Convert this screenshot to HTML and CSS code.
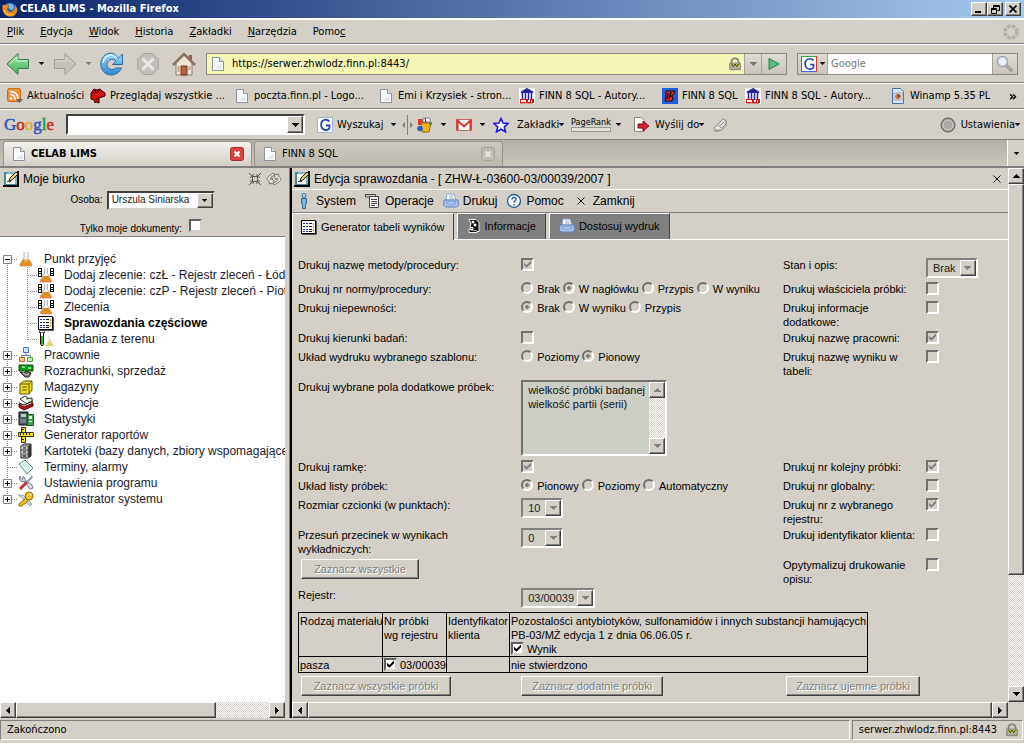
FILE: index.html
```html
<!DOCTYPE html>
<html lang="pl">
<head>
<meta charset="utf-8">
<title>CELAB LIMS - Mozilla Firefox</title>
<link rel="stylesheet" href="styles.css">
</head>
<body>
<svg class="defs" aria-hidden="true">
  <defs>
    <linearGradient id="g-green" x1="0" y1="0" x2="0" y2="1"><stop offset="0" stop-color="#a6e8b0"/><stop offset="1" stop-color="#3fae58"/></linearGradient>
    <linearGradient id="g-blue" x1="0" y1="0" x2="0" y2="1"><stop offset="0" stop-color="#9fdcf8"/><stop offset="1" stop-color="#2b86cf"/></linearGradient>
    <symbol id="down" viewBox="0 0 7 4"><path d="M0 0h7v1H6v1H5v1H4v1H3V3H2V2H1V1H0z"/></symbol>
    <symbol id="up" viewBox="0 0 7 4"><path d="M3 0h1v1h1v1h1v1h1v1H0V3h1V2h1V1h1z"/></symbol>
    <symbol id="left" viewBox="0 0 4 7"><path d="M4 0v7H3V6H2V5H1V4H0V3h1V2h1V1h1V0z"/></symbol>
    <symbol id="right" viewBox="0 0 4 7"><path d="M0 0v7h1V6h1V5h1V4h1V3H3V2H2V1H1V0z"/></symbol>
    <symbol id="page" viewBox="0 0 16 16"><path d="M2.500 1.500h7l4 4v9h-11z" fill="#fbfcfe" stroke="#8d939b"/><path d="M9.500 1.500v4h4" fill="#dfe4ea" stroke="#8d939b"/><path d="M4 13h8V8z" fill="#e3e7ee"/></symbol>
    <symbol id="firefox" viewBox="0 0 16 16"><circle cx="8" cy="8" r="6.500" fill="#2d5fb8"/><path d="M6 3c3-1 6 0 6 3s-2 3-4 3z" fill="#79b8ee"/><path d="M1 3c0 1 1 1 2 1 1-1 3-1 4-1C5 4 5 5 7 6c0 1-2 1-2 2 0 3 4 4 6 2 2-1 2-4 2-6 3 3 3 7 0 10-3 2.500-8 2-10.500-1C0 10 0 6 1 3z" fill="#f08a1c"/><path d="M2 9c1 4 5 6 9 4" stroke="#ffd24a" fill="none"/></symbol>
    <symbol id="back" viewBox="0 0 24 24"><path d="M1 12 12 1.500V7.500h10.500v9H12v6z" fill="url(#g-green)" stroke="#35864a" stroke-linejoin="round"/><path d="M3.500 12 11 5v4h10" fill="none" stroke="#d8f7dc"/></symbol>
    <symbol id="forward" viewBox="0 0 24 24"><path d="M23 12 12 1.500V7.500H1.500v9H12v6z" fill="#c4c2bc" stroke="#a09e98" stroke-linejoin="round"/><path d="M3 9h10V5l7 7" fill="none" stroke="#dedcd6"/></symbol>
    <symbol id="reload" viewBox="0 0 24 24"><path d="M18 6.500 22.500 2v10.500H12.500L16 9c-4-3.500-9-1-9 3.500 0 4.500 5 6.500 9 3.500h5.500c-2 4.500-6 7-10.500 7C5 23 .8 18 .8 12.200.8 6 5 1.200 11 1.200c3 0 5.500 2 7 5.300z" fill="url(#g-blue)" stroke="#2a6ca8"/><path d="M3 11c0-4 4-8 8-8 2 0 4 1 6 3" stroke="#d7f1fd" stroke-width="1.500" fill="none"/></symbol>
    <symbol id="stop" viewBox="0 0 24 24"><path d="M7.500 1.500h9l6 6v9l-6 6h-9l-6-6v-9z" fill="#c2c0ba" stroke="#a9a7a1"/><path d="m7.500 7.500 9 9m0-9-9 9" stroke="#eceae5" stroke-width="3" stroke-linecap="round"/></symbol>
    <symbol id="home" viewBox="0 0 24 24"><path d="M17 3h3v6h-3z" fill="#a35a4a"/><path d="M4 11 12 3l8 8v12H4z" fill="#eee5d6" stroke="#8f7d6c"/><path d="M1 13 12 2l11 11" fill="none" stroke="#8a7161" stroke-width="2.500"/><path d="M9 14h6v9H9z" fill="#b5623f" stroke="#6f3c28"/><path d="M5.500 14h2v6h-2zM16.500 14h2v4h-2z" fill="#c4a58b"/></symbol>
    <symbol id="lock" viewBox="0 0 16 16"><path d="M4 8V5.500C4 3 5.500 1.500 8 1.500S12 3 12 5.500V8" fill="none" stroke="#85857f" stroke-width="2"/><path d="M2 7h12v7.500H2z" fill="#a9a9a3" stroke="#73736d"/><path d="m3 8 2 3 2-3 2 3 2-3 2 3" fill="none" stroke="#d9cf3a" stroke-width="1.500"/><path d="m4 8 2 3 2-3 2 3 2-3" fill="none" stroke="#222"/></symbol>
    <symbol id="go" viewBox="0 0 12 14"><path d="M1 1.500 11 7 1 12.500z" fill="#58c07e" stroke="#2c7d4c"/></symbol>
    <symbol id="gicon" viewBox="0 0 16 16"><path d="M.5.500h15v15H.5z" fill="#fff" stroke="#9ab2d8"/><path d="M12.500 4.500C11 2.500 7.500 2 5.500 4S3.500 10 6 12s6 1 6.500-1V8.500H9" fill="none" stroke="#1f44b8" stroke-width="1.800"/></symbol>
    <symbol id="gicon4" viewBox="0 0 16 16"><path d="M0 0h16v16H0z" fill="#fff"/><path d="M.5 0v16M0 15.500h16" stroke="#3769d8"/><path d="M0 .5h16" stroke="#2ca33c"/><path d="M15.500 0v16" stroke="#d8322a"/><path d="M12.500 4.500C11 2.500 7.500 2 5.500 4S3.500 10 6 12s6 1 6.500-1V8.500H9" fill="none" stroke="#1f44b8" stroke-width="1.600"/></symbol>
    <symbol id="magnifier" viewBox="0 0 18 18"><path d="m10 10 6 6" stroke="#8c8c8c" stroke-width="3"/><path d="m10 10 5 5" stroke="#d6d6d6"/><circle cx="6.500" cy="6.500" r="5" fill="#e3f0fa" stroke="#a3a8ad" stroke-width="1.500"/></symbol>
    <symbol id="throbber" viewBox="0 0 18 18"><circle cx="9" cy="9" r="6" fill="none" stroke="#b3b0a9" stroke-width="3.500" stroke-dasharray="3.500 1.210"/></symbol>
    <symbol id="rss" viewBox="0 0 16 16"><rect x=".5" y=".5" width="13" height="13" rx="2" fill="#f19131" stroke="#c4681a"/><circle cx="4" cy="10.500" r="1.300" fill="#fff"/><path d="M3 6.500c3 0 5 2 5 5M3 3.500c5 0 8 3 8 8" fill="none" stroke="#fff" stroke-width="1.500"/><path d="M9 11h7l-3.500 4z" fill="#666"/></symbol>
    <symbol id="dino" viewBox="0 0 16 16"><path d="M1 5 4 1l3 1 3-1 2 2 3 2v3l-3 1-3 1v5l-3-1-1 1-1-3-3-1V8z" fill="#d40d0d" stroke="#3b0000"/><path d="m3 4 2 2m0-4 1 3m2-3v3M6 11h3" stroke="#220000"/></symbol>
    <symbol id="temple" viewBox="0 0 16 16"><path d="M0 0h16v16H0z" fill="#fff"/><path d="M8 0 1 4h14zM2 4h12v1H2z" fill="#26269b"/><path d="M3.500 5v7M6.500 5v7M9.500 5v7M12.500 5v7" stroke="#26269b" stroke-width="1.500"/><path d="M1 11h5v1H2v2h4v1H1zM7 11h2v3h2v-3h1v4H7zM13 11h2v4h-2z" fill="#d81818"/><path d="M1 15h13" stroke="#d81818"/></symbol>
    <symbol id="finnb" viewBox="0 0 16 16"><path d="M0 0h16v16H0z" fill="#1f5ed8"/><path d="M4 3h9l-1 3-2 2 1 2-1 3H3l1-5z" fill="#e22718" stroke="#111"/><path d="m6 5-1 6m4-7-2 7m0-3h3" stroke="#111" stroke-width="1.300"/></symbol>
    <symbol id="winamp" viewBox="0 0 16 16"><path d="M2.500.500h8l3 3v12h-11z" fill="#d6e6f8" stroke="#4473b8"/><path d="M4 5h8v7H4z" fill="#fff" stroke="#7796c4" stroke-width=".8"/><circle cx="8" cy="8.500" r="3" fill="#e57d22"/><circle cx="8.500" cy="8" r="1.600" fill="#3464b0"/></symbol>
    <symbol id="vsplit" viewBox="0 0 12 20"><path d="M6.500 0v20" stroke="#808080"/><path d="M4 7v6L1 10zM9 7v6l3-3z" fill="#808080"/></symbol>
    <symbol id="toys" viewBox="0 0 16 16"><path d="M1 2h6v6H1z" fill="#d9392b"/><path d="M6 1h7v4H6z" fill="#fff" stroke="#888"/><path d="M4 6h10l-2 9H5z" fill="#f0b323" stroke="#8d6a12"/><path d="M12 5h3v3h-3z" fill="#38a13f"/><circle cx="3" cy="11.500" r="2.800" fill="#2f62c2"/><path d="M8 1 9 6" stroke="#333"/></symbol>
    <symbol id="gmail" viewBox="0 0 16 12"><path d="M.5.500h15v11H.5z" fill="#fff" stroke="#c66"/><path d="M1.500 11V1.500L8 7.500l6.500-6V11" fill="none" stroke="#dc3327" stroke-width="2"/></symbol>
    <symbol id="star" viewBox="0 0 16 16"><path d="m8 1.500 2 4.500 5 .5-3.700 3.300 1.200 5L8 12.200l-4.500 2.600 1.200-5L1 6.500 6 6z" fill="#fff" stroke="#1c1ce0" stroke-width="1.600"/></symbol>
    <symbol id="send" viewBox="0 0 16 16"><path d="M1.500.500h7l3 3v11h-10z" fill="#fff" stroke="#8a8a8a"/><path d="M5 7h5V4l6 5-6 5v-3H5z" fill="#d41f2e" stroke="#8a0b18"/></symbol>
    <symbol id="pen" viewBox="0 0 15 15"><path d="M1 11 5 7l6-6 3 2v5l-5 5H3z" fill="#e6e4df" stroke="#777"/><path d="m5 7 4 4 5-5M7 9l5-5M1 14h6" fill="none" stroke="#888"/></symbol>
    <symbol id="disc" viewBox="0 0 16 16"><circle cx="8" cy="8" r="7" fill="#9a9a96" stroke="#5c5c5a"/><circle cx="8" cy="8" r="5" fill="#aaa9a5" stroke="#d0d0cc"/></symbol>
    <symbol id="x-red" viewBox="0 0 14 14"><rect x=".5" y=".5" width="13" height="13" rx="2" fill="#d9443f" stroke="#a62c2a"/><path d="m4.500 4.500 5 5m0-5-5 5" stroke="#fff" stroke-width="2"/></symbol>
    <symbol id="x-gray" viewBox="0 0 14 14"><rect x=".5" y=".5" width="13" height="13" rx="2" fill="#c0bdb7" stroke="#a5a29c"/><path d="m4.500 4.500 5 5m0-5-5 5" stroke="#e9e7e3" stroke-width="2"/></symbol>
    <symbol id="edit" viewBox="0 0 16 16"><path d="M1 1h14v14H1z" fill="#7fb6c6"/><path d="M1 15V1h3v12h10v2z" fill="#3f87a3"/><path d="M3 3h9v10H3z" fill="#fffef0"/><path d="M15 0v15H0" fill="none" stroke="#000" stroke-width="2"/><path d="m6 10 1-3 6-6 2 2-6 6z" fill="#e9d26a" stroke="#222"/><path d="M4 11c1-2 2 1 4-1" fill="none" stroke="#222"/></symbol>
    <symbol id="shrink" viewBox="0 0 14 14"><path d="M1 1l4 4m8-4L9 5M1 13l4-4m8 4L9 9" stroke="#555"/><path d="M4.500 4.500h5v5h-5zM2 5h3V2M9 2v3h3M2 9h3v3M9 12V9h3" fill="none" stroke="#555"/></symbol>
    <symbol id="swap" viewBox="0 0 16 16"><path d="M8 2 3 5C0 7 1 10 4 11l-1 2 5-1-2-5-1 2C3 8 4 7 5 6l4-2zM8 14l5-3c3-2 2-5-1-6l1-2-5 1 2 5 1-2c2 1 1 2 0 3l-4 2z" fill="#eceae5" stroke="#666" stroke-width=".8"/></symbol>
    <symbol id="flask" viewBox="0 0 16 16"><path d="M6 1v6l-4 6v2h12v-2l-4-6V1" fill="#f4f4f4" stroke="#b9b9b9"/><path d="M5 8.500h6l3 5V15H2v-1.500z" fill="#e68a1f"/><path d="M6 10h3" stroke="#ffcf86"/></symbol>
    <symbol id="flask2" viewBox="0 0 16 16"><path d="M6.500 1v5l-4 7v2h11v-2l-4-7V1" fill="#f4f4f4" stroke="#b9b9b9"/><path d="M5.500 9h5l3 4.500V15h-11v-1.500z" fill="#e68a1f"/><path d="M0 1h4v9H0zM12 1h4v8h-4z" fill="#111"/><path d="M1 2h2v2H1zM1 5h2v1H1zM1 7h2v2H1zM13 2h2v2h-2zM13 5h2v1h-2zM13 7h2v1h-2z" fill="#fff"/></symbol>
    <symbol id="table" viewBox="0 0 16 16"><path d="M.5 1.500h14v13H.5z" fill="#fff" stroke="#000"/><path d="M15.500 2v13.500H1" fill="none" stroke="#555"/><path d="M2 4.500h5M2 7.500h5M2 10.500h5M2 12.500h5" stroke="#1b2a9b" stroke-dasharray="2 1"/><path d="M8 4.500h3M8 7.500h3M8 10.500h3M8 12.500h3" stroke="#111"/><path d="M12.500 4v9" stroke="#d8a315" stroke-width="1.500" stroke-dasharray="2 1"/></symbol>
    <symbol id="tube" viewBox="0 0 16 16"><path d="M1 1h1v1h4V1h1" fill="none" stroke="#000"/><path d="M2.500 2v11l1.500 2 1.500-2V2" fill="#fff" stroke="#000"/><path d="M3 5h2v8l-1 1-1-1z" fill="#27c427"/><path d="m10.500 5 1 4-4 6h8l-3-5z" fill="#e0d45e" stroke="#d8d8c0" stroke-width=".6"/></symbol>
    <symbol id="net" viewBox="0 0 16 16"><path d="M8 6v3M3.500 11V8.500h9V11" fill="none" stroke="#5a7ea8"/><path d="M5.500.500h5v5h-5z" fill="#cfe3f8" stroke="#3f76b5"/><path d="M1.500 10.500h5v4h-5z" fill="#f8c8a0" stroke="#d26427"/><path d="M9.500 10.500h5v4h-5z" fill="#c8ecb8" stroke="#4aa43a"/></symbol>
    <symbol id="cash" viewBox="0 0 16 16"><path d="M1 2h14v6H1z" fill="#0c9b1c" stroke="#064d0c"/><path d="M4 3h3v2H4zM10 4h3v2h-3z" fill="#7ee07e"/><path d="m2 9 4 1 2-2 5 2-2 4H7z" fill="#6d6d6d" stroke="#2b2b2b"/><path d="m5 10 3 2 3-1" stroke="#ccc" fill="none"/></symbol>
    <symbol id="box" viewBox="0 0 16 16"><path d="m2 5 4-3h8v9l-3 4H2z" fill="#f5e11c" stroke="#5a5200"/><path d="M2 5h9l3-3M11 5v10M4 8h5M4 11h5" fill="none" stroke="#5a5200"/></symbol>
    <symbol id="cards" viewBox="0 0 16 16"><path d="m2 4 5-3 6 4-4 4z" fill="#fff" stroke="#333"/><path d="m8 4 6-1v5" fill="#cfc" stroke="#333"/><path d="m1 9 5 3 9-4v3l-9 4-5-3z" fill="#c3151b" stroke="#400"/><path d="m1 8 5 2 9-4" fill="none" stroke="#000"/></symbol>
    <symbol id="stats" viewBox="0 0 16 16"><path d="M1 1h9v13H1z" fill="#4a5a58" stroke="#111"/><path d="M3 3h5v3H3z" fill="#a9d8b8"/><path d="M9.500 3.500h6v11h-6z" fill="#43a047" stroke="#1c5a20"/><path d="M11 5h3v3h-3zM11 10h3v1h-3z" fill="#dff3df"/><path d="M3 8v4M5 8v4M7 8v4" stroke="#9ab"/></symbol>
    <symbol id="ruler" viewBox="0 0 16 16"><path d="M3.500.500h4v15h-4z" fill="#f2df15" stroke="#333"/><path d="M.5 5.500h15v4H.5z" fill="#f2df15" stroke="#333"/><path d="M2.500 6v2M5.500 6v2M8.500 6v2M11.500 6v2M4 2.500h2M4 12.500h2" stroke="#222"/></symbol>
    <symbol id="cabinet" viewBox="0 0 16 16"><path d="m3 3 3-2h7v12l-3 2H3z" fill="#b7b7b1" stroke="#222"/><path d="M10 3v12l3-2V1z" fill="#333"/><path d="M3 3h7v4H3zM3 7h7v4H3z" fill="#dcdcd4" stroke="#666"/><path d="M5 5h3M5 9h3M5 13h3" stroke="#000"/></symbol>
    <symbol id="note" viewBox="0 0 16 16"><path d="m1 5 6-4 8 8-6 6z" fill="#cfeee6" stroke="#5c8b80"/><path d="m3 5 4-3 6 7-4 4z" fill="none" stroke="#fff"/></symbol>
    <symbol id="tools" viewBox="0 0 16 16"><path d="M2 1 1 4l3 3 2-1 6 8 3-1-1-3-7-5V3L5 1v3L3 4z" fill="#d5d9de" stroke="#667" stroke-width=".8"/><path d="m9 7-7 7" stroke="#c33036" stroke-width="3"/><path d="m14.500 1.500-6 6" stroke="#8a97ac" stroke-width="2"/></symbol>
    <symbol id="key" viewBox="0 0 16 16"><path d="M1 3c1 2 3 2 4 1l9 9-2 2-9-9-2-1z" fill="#cdd3dc" stroke="#8b95a4" stroke-width=".8"/><path d="m8 7-7 6v2h3l1-2h2l3-4z" fill="#f6c41f" stroke="#8f6b00"/><circle cx="11" cy="5" r="4" fill="#f6c41f" stroke="#8f6b00"/><circle cx="12.500" cy="3.500" r="1" fill="#fff"/></symbol>
    <symbol id="person" viewBox="0 0 8 16"><circle cx="4" cy="2.500" r="2" fill="#b9dcf2" stroke="#2e6d98"/><path d="M1.500 5.500h5v5h-1v5h-3v-5h-1z" fill="#79b4dc" stroke="#2e6d98"/></symbol>
    <symbol id="list" viewBox="0 0 16 16"><path d="M4.500 3.500h9v11h-9z" fill="#fff" stroke="#444"/><path d="M.5 1.500h10v2M.5 1v3h4M6 6.500h6M6 8.500h6M6 10.500h6M6 12.500h4" fill="none" stroke="#444"/></symbol>
    <symbol id="printer" viewBox="0 0 16 16"><path d="M4 1h7l2 6H3z" fill="#fff" stroke="#8aa6cc"/><path d="M6 3h4M6 5h5" stroke="#9ab"/><path d="M1 7h14l.5 5-2 2h-11l-2-2z" fill="#a9c4ee" stroke="#5d84c0"/><path d="M3 9h10l-1 2H4z" fill="#e7effb" stroke="#6d92cb"/></symbol>
    <symbol id="help" viewBox="0 0 16 16"><circle cx="8" cy="8" r="6.500" fill="#fff" stroke="#2c5f9e" stroke-width="1.400"/><path d="M6 6.500C6 3.500 10.500 4 10 6.500 9.800 8 8 8 8 9.800" fill="none" stroke="#2c5f9e" stroke-width="1.500"/><path d="M7.200 11h1.600v1.600H7.200z" fill="#2c5f9e"/></symbol>
    <symbol id="cross" viewBox="0 0 8 8"><path d="m.5.500 7 7m0-7-7 7" stroke="#111"/></symbol>
    <symbol id="scope" viewBox="0 0 14 16"><path d="M2 1.500h7l3 3v9h-2v1H2v-3h4v-2H3l1-4z" fill="#111" stroke="#fff" stroke-width=".9"/><path d="M5 3h2v2H5zM7 6h2v2H7zM4 12.500h6" fill="#fff" stroke="#fff" stroke-width=".6"/></symbol>
    <symbol id="t-plus" viewBox="0 0 18 16"><path d="M7.500 0v16M12 8.500h6" stroke="#888" stroke-dasharray="1 1"/><path d="M3.500 4.500h8v8h-8z" fill="#fff" stroke="#808080"/><path d="M5 8.500h5M7.500 6v5" stroke="#000"/></symbol>
    <symbol id="t-minus" viewBox="0 0 18 16"><path d="M7.500 8v8M12 8.500h6" stroke="#888" stroke-dasharray="1 1"/><path d="M3.500 4.500h8v8h-8z" fill="#fff" stroke="#808080"/><path d="M5 8.500h5" stroke="#000"/></symbol>
    <symbol id="t-last" viewBox="0 0 18 16"><path d="M7.500 0v5M12 8.500h6" stroke="#888" stroke-dasharray="1 1"/><path d="M3.500 4.500h8v8h-8z" fill="#fff" stroke="#808080"/><path d="M5 8.500h5M7.500 6v5" stroke="#000"/></symbol>
    <symbol id="t-leaf" viewBox="0 0 18 16"><path d="M7.500 0v16M8 8.500h10" stroke="#888" stroke-dasharray="1 1"/></symbol>
    <symbol id="t-child" viewBox="0 0 38 16"><path d="M7.500 0v16M27.500 0v16M28 8.500h9" stroke="#888" stroke-dasharray="1 1"/></symbol>
    <symbol id="t-end" viewBox="0 0 38 16"><path d="M7.500 0v16M27.500 0v9M28 8.500h9" stroke="#888" stroke-dasharray="1 1"/></symbol>
  </defs>
</svg>

<div class="window">
  <header class="titlebar">
    <svg class="i16"><use href="#firefox"/></svg>
    <h1>CELAB LIMS - Mozilla Firefox</h1>
    <button class="winbtn" aria-label="Minimalizuj"><svg width="8" height="8" viewBox="0 0 8 8"><path d="M0 6h6v2H0z"/></svg></button>
    <button class="winbtn" aria-label="Przywróć"><svg width="9" height="9" viewBox="0 0 9 9"><path d="M2.500 3V.5h6v5H6M2 1.500h6" fill="none" stroke="#000"/><path d="M.5 3.500h5v5h-5zM0 4.500h6" fill="none" stroke="#000"/></svg></button>
    <button class="winbtn last" aria-label="Zamknij"><svg width="8" height="8" viewBox="0 0 8 8"><path d="m.5.500 7 7m0-7-7 7" stroke="#000" stroke-width="1.600"/></svg></button>
  </header>

  <nav class="menubar">
    <a href="#"><u>P</u>lik</a><a href="#"><u>E</u>dycja</a><a href="#"><u>W</u>idok</a><a href="#"><u>H</u>istoria</a><a href="#"><u>Z</u>akładki</a><a href="#"><u>N</u>arzędzia</a><a href="#">Pomo<u>c</u></a>
    <svg class="i18 push"><use href="#throbber"/></svg>
  </nav>

  <div class="navbar">
    <button class="flat" aria-label="Wstecz"><svg class="i24"><use href="#back"/></svg></button>
    <svg class="caret"><use href="#down"/></svg>
    <button class="flat" aria-label="Dalej"><svg class="i24"><use href="#forward"/></svg></button>
    <svg class="caret dim"><use href="#down"/></svg>
    <button class="flat" aria-label="Odśwież"><svg class="i24"><use href="#reload"/></svg></button>
    <button class="flat wide" aria-label="Zatrzymaj"><svg class="i24"><use href="#stop"/></svg></button>
    <button class="flat wide" aria-label="Strona startowa"><svg class="i24"><use href="#home"/></svg></button>
    <div class="url">
      <svg class="i16"><use href="#page"/></svg>
      <input type="text" aria-label="Adres" value="https://serwer.zhwlodz.finn.pl:8443/">
      <svg class="i14"><use href="#lock"/></svg>
      <button class="seg" aria-label="Historia adresów"><svg class="arrow dim"><use href="#down"/></svg></button>
      <button class="seg go" aria-label="Przejdź"><svg width="12" height="14"><use href="#go"/></svg></button>
    </div>
    <div class="search">
      <button class="seg engine" aria-label="Wyszukiwarka"><svg class="i16"><use href="#gicon4"/></svg><svg class="caret"><use href="#down"/></svg></button>
      <input type="text" aria-label="Szukaj" placeholder="Google">
      <button class="seg go" aria-label="Szukaj"><svg class="i18"><use href="#magnifier"/></svg></button>
    </div>
  </div>

  <nav class="bookmarks">
    <a href="#"><svg class="i16"><use href="#rss"/></svg>Aktualności</a>
    <a href="#"><svg class="i16"><use href="#dino"/></svg>Przeglądaj wszystkie ...</a>
    <a href="#"><svg class="i16"><use href="#page"/></svg>poczta.finn.pl - Logo...</a>
    <a href="#"><svg class="i16"><use href="#page"/></svg>Emi i Krzysiek - stron...</a>
    <a href="#"><svg class="i16"><use href="#temple"/></svg>FINN 8 SQL - Autory...</a>
    <a href="#"><svg class="i16"><use href="#finnb"/></svg>FINN 8 SQL</a>
    <a href="#"><svg class="i16"><use href="#temple"/></svg>FINN 8 SQL - Autory...</a>
    <a href="#"><svg class="i16"><use href="#winamp"/></svg>Winamp 5.35 PL</a>
    <button class="more" aria-label="Więcej">»</button>
  </nav>

  <div class="gbar">
    <div class="glogo"><span class="b">G</span><span class="r">o</span><span class="y">o</span><span class="b">g</span><span class="g">l</span><span class="r">e</span></div>
    <div class="combo gfield"><input type="text" aria-label="Zapytanie"><button class="cbtn" aria-label="Rozwiń"><svg class="arrow"><use href="#down"/></svg></button></div>
    <button class="flat gsearch"><svg class="i16"><use href="#gicon"/></svg>Wyszukaj<svg class="caret"><use href="#down"/></svg></button>
    <svg class="vsplit"><use href="#vsplit"/></svg>
    <button class="flat gsm" aria-label="Nowości"><svg class="i16"><use href="#toys"/></svg><svg class="caret"><use href="#down"/></svg></button>
    <button class="flat gsm" aria-label="Gmail"><svg width="16" height="12"><use href="#gmail"/></svg><svg class="caret"><use href="#down"/></svg></button>
    <button class="flat gmark"><svg class="i16"><use href="#star"/></svg>Zakładki<svg class="tiny"><use href="#down"/></svg></button>
    <button class="flat grank"><span class="rank">PageRank<i></i></span><svg class="caret"><use href="#down"/></svg></button>
    <button class="flat gsend"><svg class="i16"><use href="#send"/></svg>Wyślij do<svg class="tiny"><use href="#down"/></svg></button>
    <button class="flat" aria-label="Podświetl"><svg class="i14"><use href="#pen"/></svg></button>
    <button class="flat gset push"><svg class="i16"><use href="#disc"/></svg>Ustawienia<svg class="tiny"><use href="#down"/></svg></button>
  </div>

  <div class="tabstrip">
    <div class="btab active"><svg class="i16"><use href="#page"/></svg><span>CELAB LIMS</span><button class="flat" aria-label="Zamknij kartę"><svg class="i14"><use href="#x-red"/></svg></button></div>
    <div class="btab"><svg class="i16"><use href="#page"/></svg><span>FINN 8 SQL</span><button class="flat" aria-label="Zamknij kartę"><svg class="i14"><use href="#x-gray"/></svg></button></div>
    <button class="alltabs push" aria-label="Lista kart"><svg class="tiny"><use href="#down"/></svg></button>
  </div>

  <div class="content">
    <aside class="side">
      <div class="sidehead">
        <div class="sidetitle"><svg class="i16"><use href="#edit"/></svg><h2>Moje biurko</h2><svg class="i14 push"><use href="#shrink"/></svg><svg class="i16"><use href="#swap"/></svg></div>
        <div class="sideform who"><label for="osoba">Osoba:</label><div class="combo white"><select id="osoba"><option>Urszula Siniarska</option></select><span class="cbtn"><svg class="caret"><use href="#down"/></svg></span></div></div>
        <div class="sideform mine"><label for="moje">Tylko moje dokumenty:</label><input type="checkbox" class="white" id="moje"></div>
      </div>
      <ul class="tree">
        <li><svg class="t1"><use href="#t-minus"/></svg><svg class="i16"><use href="#flask"/></svg><a href="#">Punkt przyjęć</a></li>
        <li><svg class="t2"><use href="#t-child"/></svg><svg class="i16"><use href="#flask2"/></svg><a href="#">Dodaj zlecenie: czŁ - Rejestr zleceń - Łódź</a></li>
        <li><svg class="t2"><use href="#t-child"/></svg><svg class="i16"><use href="#flask2"/></svg><a href="#">Dodaj zlecenie: czP - Rejestr zleceń - Piotrków</a></li>
        <li><svg class="t2"><use href="#t-child"/></svg><svg class="i16"><use href="#flask2"/></svg><a href="#">Zlecenia</a></li>
        <li><svg class="t2"><use href="#t-child"/></svg><svg class="i16"><use href="#table"/></svg><a href="#" class="current">Sprawozdania częściowe</a></li>
        <li><svg class="t2"><use href="#t-end"/></svg><svg class="i16"><use href="#tube"/></svg><a href="#">Badania z terenu</a></li>
        <li><svg class="t1"><use href="#t-plus"/></svg><svg class="i16"><use href="#net"/></svg><a href="#">Pracownie</a></li>
        <li><svg class="t1"><use href="#t-plus"/></svg><svg class="i16"><use href="#cash"/></svg><a href="#">Rozrachunki, sprzedaż</a></li>
        <li><svg class="t1"><use href="#t-plus"/></svg><svg class="i16"><use href="#box"/></svg><a href="#">Magazyny</a></li>
        <li><svg class="t1"><use href="#t-plus"/></svg><svg class="i16"><use href="#cards"/></svg><a href="#">Ewidencje</a></li>
        <li><svg class="t1"><use href="#t-plus"/></svg><svg class="i16"><use href="#stats"/></svg><a href="#">Statystyki</a></li>
        <li><svg class="t1"><use href="#t-plus"/></svg><svg class="i16"><use href="#ruler"/></svg><a href="#">Generator raportów</a></li>
        <li><svg class="t1"><use href="#t-plus"/></svg><svg class="i16"><use href="#cabinet"/></svg><a href="#">Kartoteki (bazy danych, zbiory wspomagające)</a></li>
        <li><svg class="t1"><use href="#t-leaf"/></svg><svg class="i16"><use href="#note"/></svg><a href="#">Terminy, alarmy</a></li>
        <li><svg class="t1"><use href="#t-plus"/></svg><svg class="i16"><use href="#tools"/></svg><a href="#">Ustawienia programu</a></li>
        <li><svg class="t1"><use href="#t-last"/></svg><svg class="i16"><use href="#key"/></svg><a href="#">Administrator systemu</a></li>
      </ul>
      <div class="hscroll"><button class="sbtn" aria-label="W lewo"><svg width="4" height="7"><use href="#left"/></svg></button><div class="thumb sidethumb"></div><div class="track"></div><button class="sbtn" aria-label="W prawo"><svg width="4" height="7"><use href="#right"/></svg></button></div>
    </aside>

    <main class="main">
      <div class="pane">
        <div class="panetitle"><svg class="i16"><use href="#edit"/></svg><h2>Edycja sprawozdania - [ ZHW-Ł-03600-03/00039/2007 ]</h2><button class="flat push" aria-label="Zamknij okno"><svg width="8" height="8"><use href="#cross"/></svg></button></div>
        <nav class="panemenu">
          <a href="#"><svg width="8" height="16"><use href="#person"/></svg>System</a>
          <a href="#" class="tight"><svg class="i16"><use href="#list"/></svg>Operacje</a>
          <a href="#" class="tight"><svg class="i16"><use href="#printer"/></svg>Drukuj</a>
          <a href="#" class="tight"><svg class="i16"><use href="#help"/></svg>Pomoc</a>
          <a href="#" class="close"><svg width="8" height="8"><use href="#cross"/></svg>Zamknij</a>
        </nav>
        <div class="panetabs">
          <button class="ptab on"><svg class="i16"><use href="#table"/></svg>Generator tabeli wyników</button>
          <button class="ptab"><svg width="14" height="16"><use href="#scope"/></svg>Informacje</button>
          <button class="ptab"><svg class="i16"><use href="#printer"/></svg>Dostosuj wydruk</button>
        </div>

        <form class="form">
          <div class="fields">
            <label class="c1 r1" for="f1">Drukuj nazwę metody/procedury:</label>
            <div class="c2 r1"><input type="checkbox" id="f1" checked disabled></div>
            <label class="c3 r1" for="s1">Stan i opis:</label>
            <div class="c4 r1"><div class="combo w50"><select id="s1" disabled><option>Brak</option></select><span class="cbtn"><svg class="arrow"><use href="#down"/></svg></span></div></div>

            <span class="c1 r2">Drukuj nr normy/procedury:</span>
            <div class="c2 r2 radios"><label><input type="radio" name="a" disabled>Brak</label><label><input type="radio" name="a" checked disabled>W nagłówku</label><label><input type="radio" name="a" disabled>Przypis</label><label><input type="radio" name="a" disabled>W wyniku</label></div>
            <label class="c3 r2" for="f2">Drukuj właściciela próbki:</label>
            <div class="c4 r2"><input type="checkbox" id="f2" disabled></div>

            <span class="c1 r3">Drukuj niepewności:</span>
            <div class="c2 r3 radios"><label><input type="radio" name="b" checked disabled>Brak</label><label><input type="radio" name="b" disabled>W wyniku</label><label><input type="radio" name="b" disabled>Przypis</label></div>
            <label class="c3 r3" for="f3">Drukuj informacje dodatkowe:</label>
            <div class="c4 r3"><input type="checkbox" id="f3" disabled></div>

            <label class="c1 r4" for="f4">Drukuj kierunki badań:</label>
            <div class="c2 r4"><input type="checkbox" id="f4" disabled></div>
            <label class="c3 r4" for="f5">Drukuj nazwę pracowni:</label>
            <div class="c4 r4"><input type="checkbox" id="f5" checked disabled></div>

            <span class="c1 r5">Układ wydruku wybranego szablonu:</span>
            <div class="c2 r5 radios"><label><input type="radio" name="c" disabled>Poziomy</label><label><input type="radio" name="c" checked disabled>Pionowy</label></div>
            <label class="c3 r5" for="f6">Drukuj nazwę wyniku w tabeli:</label>
            <div class="c4 r5"><input type="checkbox" id="f6" disabled></div>

            <label class="c1 r6" for="l1">Drukuj wybrane pola dodatkowe próbek:</label>
            <div class="c2 r6"><div class="listbox"><select id="l1" multiple size="4" disabled><option>wielkość próbki badanej</option><option>wielkość partii (serii)</option></select><div class="vbar"><span class="sbtn"><svg class="arrow"><use href="#up"/></svg></span><span class="track"></span><span class="sbtn"><svg class="arrow"><use href="#down"/></svg></span></div></div></div>

            <label class="c1 r7" for="f7">Drukuj ramkę:</label>
            <div class="c2 r7"><input type="checkbox" id="f7" checked disabled></div>
            <label class="c3 r7" for="f8">Drukuj nr kolejny próbki:</label>
            <div class="c4 r7"><input type="checkbox" id="f8" checked disabled></div>

            <span class="c1 r8">Układ listy próbek:</span>
            <div class="c2 r8 radios"><label><input type="radio" name="d" checked disabled>Pionowy</label><label><input type="radio" name="d" disabled>Poziomy</label><label><input type="radio" name="d" disabled>Automatyczny</label></div>
            <label class="c3 r8" for="f9">Drukuj nr globalny:</label>
            <div class="c4 r8"><input type="checkbox" id="f9" disabled></div>

            <label class="c1 r9" for="s2">Rozmiar czcionki (w punktach):</label>
            <div class="c2 r9"><div class="combo w42"><select id="s2" disabled><option>10</option></select><span class="cbtn"><svg class="arrow"><use href="#down"/></svg></span></div></div>
            <label class="c3 r9" for="f10">Drukuj nr z wybranego rejestru:</label>
            <div class="c4 r9"><input type="checkbox" id="f10" checked disabled></div>

            <label class="c1 r10 narrow" for="s3">Przesuń przecinek w wynikach wykładniczych:</label>
            <div class="c2 r10"><div class="combo w42"><select id="s3" disabled><option>0</option></select><span class="cbtn"><svg class="arrow"><use href="#down"/></svg></span></div></div>
            <label class="c3 r10" for="f11">Drukuj identyfikator klienta:</label>
            <div class="c4 r10"><input type="checkbox" id="f11" disabled></div>

            <div class="c1 r11"><button class="push-btn b1" type="button" disabled>Zaznacz wszystkie</button></div>
            <label class="c3 r11" for="f12">Opytymalizuj drukowanie opisu:</label>
            <div class="c4 r11"><input type="checkbox" id="f12" disabled></div>

            <label class="c1 r12" for="s4">Rejestr:</label>
            <div class="c2 r12"><div class="combo w74"><select id="s4" disabled><option>03/00039</option></select><span class="cbtn"><svg class="arrow"><use href="#down"/></svg></span></div></div>
          </div>

          <table class="samples">
            <colgroup><col class="k1"><col class="k2"><col class="k3"><col class="k4"></colgroup>
            <thead><tr><th>Rodzaj materiału</th><th>Nr próbki<br>wg rejestru</th><th>Identyfikator<br>klienta</th><th>Pozostalości antybiotyków, sulfonamidów i innych substancji hamujących<br>PB-03/MŻ edycja 1 z dnia 06.06.05 r.<br><label><input type="checkbox" class="white" checked>Wynik</label></th></tr></thead>
            <tbody><tr><td>pasza</td><td><label><input type="checkbox" class="white" checked>03/00039</label></td><td></td><td>nie stwierdzono</td></tr></tbody>
          </table>

          <div class="actions">
            <button class="push-btn b2" type="button" disabled>Zaznacz wszystkie próbki</button>
            <button class="push-btn b3" type="button" disabled>Zaznacz dodatnie próbki</button>
            <button class="push-btn b4" type="button" disabled>Zaznacz ujemne próbki</button>
          </div>
        </form>
      </div>
      <div class="vscroll"><button class="sbtn" aria-label="W górę"><svg class="arrow"><use href="#up"/></svg></button><div class="thumb"></div><div class="track"></div><button class="sbtn" aria-label="W dół"><svg class="arrow"><use href="#down"/></svg></button></div>
      <div class="hscroll"><button class="sbtn" aria-label="W lewo"><svg width="4" height="7"><use href="#left"/></svg></button><div class="thumb grow"></div><button class="sbtn" aria-label="W prawo"><svg width="4" height="7"><use href="#right"/></svg></button></div>
    </main>
  </div>

  <footer class="status"><div class="panel grow">Zakończono</div><div class="panel host">serwer.zhwlodz.finn.pl:8443<svg class="i14"><use href="#lock"/></svg></div></footer>
</div>
</body>
</html>
```
FILE: styles.css
```css
* { box-sizing: border-box; }

body {
  margin: 0;
  background: #d4d0c8;
  color: #000;
  font: 11px/14px "DejaVu Sans Condensed", "DejaVu Sans", sans-serif;
}

h1, h2 { margin: 0; font-size: inherit; }
a { color: inherit; text-decoration: none; white-space: nowrap; }
button, input, select { font: inherit; color: inherit; margin: 0; padding: 0; }
svg { display: block; flex: none; }

.defs { position: absolute; width: 0; height: 0; }
.i14 { width: 14px; height: 14px; }
.i16 { width: 16px; height: 16px; }
.i18 { width: 18px; height: 18px; }
.i24 { width: 24px; height: 24px; }
.caret { width: 5px; height: 3px; }
.tiny { width: 5px; height: 3px; }
.arrow { width: 7px; height: 4px; }
.dim { fill: #777; }
.push { margin-left: auto; }
.grow { flex: 1; }

.window { display: flex; flex-direction: column; min-height: 100vh; }

.flat {
  display: flex;
  align-items: center;
  border: 0;
  background: none;
  white-space: nowrap;
}

/* title bar */
.titlebar {
  display: flex;
  align-items: center;
  height: 18px;
  padding: 0 3px 0 2px;
  background: linear-gradient(to right, #0a246a, #a6caf0);
  color: #fff;
}
.titlebar h1 { flex: 1; padding-left: 2px; font-weight: bold; }
.winbtn, .sbtn, .cbtn {
  display: flex;
  align-items: center;
  justify-content: center;
  flex: none;
  background: #d4d0c8;
  border: 1px solid;
  border-color: #fff #404040 #404040 #fff;
  box-shadow: inset -1px -1px 0 #808080;
}
.winbtn { width: 16px; height: 14px; color: #000; }
.winbtn.last { margin-left: 2px; }

/* menu bar */
.menubar {
  display: flex;
  align-items: center;
  gap: 16px;
  height: 26px;
  padding: 0 4px 0 7px;
  border-top: 2px solid #fff;
  border-bottom: 1px solid #808080;
}

/* navigation bar */
.navbar {
  display: flex;
  align-items: center;
  height: 39px;
  gap: 10px;
  padding: 0 6px;
  border-top: 1px solid #fff;
  border-bottom: 1px solid #808080;
}
.navbar > .caret { margin: 0 -1px; }
.navbar .wide { margin-left: 2px; }
.url, .search {
  display: flex;
  align-items: center;
  height: 22px;
  border: 1px solid #8d8a84;
}
.url { flex: 1; background: #f5f5b5; padding-left: 3px; }
.url input, .search input, .gfield input {
  flex: 1;
  min-width: 0;
  border: 0;
  background: none;
  outline: 0;
}
.url input { padding-left: 6px; }
.url .i14 { margin-right: 2px; }
.search { width: 221px; background: #fff; }
.search input { padding-left: 3px; }
.search input::placeholder { color: #777; opacity: 1; }
.seg {
  display: flex;
  align-items: center;
  justify-content: center;
  align-self: stretch;
  width: 17px;
  border: 0;
  border-left: 1px solid #a5a29c;
  background: linear-gradient(#dedbd4, #c9c5bc);
}
.seg.go { width: 25px; }
.seg.engine { width: 30px; gap: 3px; border-left: 0; border-right: 1px solid #a5a29c; }

/* bookmarks */
.bookmarks {
  display: grid;
  grid-template-columns: 83px 144px 144px 141px 143px 83px 145px 1fr auto;
  align-items: center;
  height: 26px;
  padding: 0 7px;
  border-top: 1px solid #fff;
  border-bottom: 1px solid #808080;
}
.bookmarks a { display: flex; align-items: center; gap: 4px; }
.more { border: 0; background: none; font-size: 14px; font-weight: bold; }

/* search toolbar */
.gbar {
  display: flex;
  align-items: center;
  height: 31px;
  padding: 0 4px;
  border-top: 1px solid #fff;
  border-bottom: 1px solid #808080;
}
.glogo { width: 62px; font: 17px/20px "Liberation Serif", serif; -webkit-text-stroke: 0.5px; }
.glogo .b { color: #2a56c6; }
.glogo .r { color: #cc2a22; }
.glogo .y { color: #e0ae1c; }
.glogo .g { color: #1f9a3a; }
.combo {
  display: flex;
  height: 20px;
  background: #cfcfc6;
  border: 2px solid;
  border-color: #808080 #fff #fff #808080;
}
.combo select {
  flex: 1;
  min-width: 0;
  appearance: none;
  border: 0;
  background: none;
  padding-left: 5px;
  opacity: 1;
  color: #222;
}
.combo .cbtn { width: 16px; }
.combo select:disabled + .cbtn svg, .vbar svg { fill: #808080; }
.gfield { width: 239px; height: 21px; background: #fff; border-top-color: #404040; border-left-color: #404040; }
.gsearch { margin-left: 12px; gap: 4px; width: 84px; }
.gsearch .caret { margin-left: 4px; }
.vsplit { width: 12px; height: 20px; }
.gsm { width: 39px; margin-left: 4px; gap: 8px; }
.gsm + .gsm { margin-left: 0; }
.gmark { gap: 8px; width: 78px; margin-left: -2px; }
.gmark .tiny, .gsend .tiny { margin-left: -8px; }
.grank { gap: 5px; width: 62px; }
.rank { font-size: 9px; line-height: 10px; }
.rank i { display: block; width: 40px; height: 5px; margin: 0 auto; border: 1px solid #999; background: #e4e1da; }
.gsend { gap: 6px; width: 80px; }
.gsend .tiny { margin-left: -6px; }
.gset { gap: 5px; }
.gset .tiny { margin-left: -5px; }

/* browser tabs */
.tabstrip {
  display: flex;
  align-items: flex-end;
  gap: 2px;
  height: 28px;
  padding-left: 3px;
  background: linear-gradient(#b4b0a8, #c9c5bc);
  border-bottom: 2px solid #808080;
}
.btab {
  display: flex;
  align-items: center;
  width: 249px;
  height: 25px;
  padding: 0 7px;
  gap: 4px;
  border: 1px solid #97938b;
  border-bottom: 0;
  border-radius: 3px 3px 0 0;
  background: linear-gradient(#cdc9c1, #bdb9b0);
}
.btab.active { background: linear-gradient(#f3f1ed, #d4d0c8); font-weight: bold; }
.btab span { flex: 1; }
.alltabs {
  display: flex;
  align-items: center;
  justify-content: center;
  width: 17px;
  height: 26px;
  border: 0;
  border-left: 1px solid #fff;
  background: #d4d0c8;
}

/* content */
.content {
  display: flex;
  flex: 1;
  font: 11px/14px "Liberation Sans", Arial, sans-serif;
}
.content h2 { font-size: 12px; font-weight: normal; }
.side {
  display: flex;
  flex-direction: column;
  flex: 0 0 290px;
  min-width: 0;
  border-right: 1px solid #808080;
  padding-right: 4px;
}
.sidehead { height: 69px; border-bottom: 1px solid #808080; }
.sidetitle { display: flex; align-items: center; height: 22px; padding: 0 3px; gap: 4px; }
.sideform { display: flex; align-items: center; justify-content: center; gap: 4px; font-size: 10px; height: 20px; }
.sideform.mine { height: 26px; gap: 7px; align-items: flex-end; padding-right: 3px; }
.sideform.mine input { margin-bottom: 4px; }
.combo.white { width: 108px; height: 19px; background: #fff; border-color: #404040 #d4d0c8 #d4d0c8 #404040; }
.combo.white select { padding-left: 3px; }

.tree {
  flex: 1;
  margin: 0;
  padding: 14px 0 0;
  list-style: none;
  background: #fff;
  overflow: hidden;
  font-size: 12px;
  line-height: 16px;
  color: #1a1a2a;
}
.tree li { display: flex; }
.tree a { margin-left: 10px; }
.tree .current { font-weight: bold; color: #000; }
.t1 { width: 18px; height: 16px; }
.t2 { width: 38px; height: 16px; }

.hscroll { display: flex; height: 16px; }
.hscroll .sbtn { width: 16px; }
.thumb {
  background: #d4d0c8;
  border: 1px solid;
  border-color: #fff #404040 #404040 #fff;
  box-shadow: inset -1px -1px 0 #808080;
}
.sidethumb { width: 70%; }
.track {
  flex: 1;
  background: repeating-conic-gradient(#fff 0 25%, #d4d0c8 0 50%) 0 0 / 2px 2px;
}

.main {
  display: grid;
  grid-template-columns: 1fr 16px;
  grid-template-rows: 1fr 16px;
  flex: 1;
  min-width: 0;
  border-left: 2px solid #000;
}
.vscroll { display: flex; flex-direction: column; }
.vscroll .sbtn { height: 16px; }
.vscroll .thumb { flex: 7; }
.vscroll .track { flex: 2; }

.panetitle {
  display: flex;
  align-items: center;
  gap: 4px;
  height: 22px;
  padding: 0 7px 0 2px;
  border-bottom: 1px solid #fff;
}
.panemenu {
  display: flex;
  align-items: center;
  height: 23px;
  padding-left: 8px;
  gap: 9px;
  border-bottom: 1px solid #808080;
  font-size: 12px;
}
.panemenu a { display: flex; align-items: center; gap: 8px; }
.panemenu .tight { gap: 4px; }
.panemenu .close { margin-left: 4px; }
.panetabs { display: flex; gap: 3px; height: 27px; border-bottom: 1px solid #fff; }
.ptab {
  display: flex;
  align-items: center;
  gap: 4px;
  height: 26px;
  padding: 0 9px;
  border: 1px solid;
  border-color: #fff #404040 #808080 #fff;
  background: #808080;
}
.ptab.on { height: 27px; padding: 0 8px; background: #d4d0c8; border-bottom: 0; }

/* form */
.form { padding: 18px 6px 5px 6px; }
.fields {
  display: grid;
  grid-template-columns: 31.700% 37.200% 20.300% 1fr;
  grid-template-rows:
    minmax(24px, auto) minmax(19px, auto) minmax(30px, auto) minmax(19px, auto)
    minmax(30px, auto) minmax(80px, auto) minmax(19px, auto) minmax(19px, auto)
    minmax(30px, auto) minmax(30px, auto) minmax(30px, auto) minmax(24px, auto);
}
.c1 { grid-column: 1; }
.c2 { grid-column: 2; }
.c3 { grid-column: 3; padding-right: 8px; }
.c4 { grid-column: 4; }
.r1 { grid-row: 1; }
.r2 { grid-row: 2; }
.r3 { grid-row: 3; }
.r4 { grid-row: 4; }
.r5 { grid-row: 5; }
.r6 { grid-row: 6; }
.r7 { grid-row: 7; }
.r8 { grid-row: 8; }
.r9 { grid-row: 9; }
.r10 { grid-row: 10; }
.r11 { grid-row: 11; }
.r12 { grid-row: 12; }
.narrow { padding-right: 40px; }
.radios { display: flex; gap: 3px; height: 14px; }
.radios label { display: flex; gap: 4px; white-space: nowrap; }

input[type="checkbox"] {
  appearance: none;
  display: block;
  flex: none;
  width: 13px;
  height: 13px;
  background: #d4d0c8;
  border: 2px solid;
  border-color: #707070 #fff #fff #707070;
}
input[type="checkbox"].white { background: #fff; border-color: #606060 #d4d0c8 #d4d0c8 #606060; }
input[type="checkbox"]:checked::before {
  content: "";
  display: block;
  width: 9px;
  height: 8px;
  background: #808080;
  clip-path: polygon(10% 35%, 38% 62%, 90% 5%, 90% 40%, 38% 98%, 10% 70%);
}
input[type="checkbox"].white:checked::before { background: #000; }
input[type="radio"] {
  appearance: none;
  flex: none;
  width: 12px;
  height: 12px;
  border: 2px solid;
  border-color: #707070 #fff #fff #707070;
  border-radius: 50%;
}
input[type="radio"]:checked { background: radial-gradient(circle, #808080 0 2px, transparent 2px); }

.w42 { width: 42px; }
.w50 { width: 52px; }
.w74 { width: 74px; }

.listbox {
  display: flex;
  width: 146px;
  height: 76px;
  background: #cccdc4;
  border: 2px solid;
  border-color: #707070 #fff #fff #707070;
}
.listbox select {
  flex: 1;
  min-width: 0;
  appearance: none;
  border: 0;
  background: none;
  padding: 2px 0 0 3px;
  overflow: hidden;
  opacity: 1;
}
.listbox option { padding: 0 2px; min-height: 14px; line-height: 14px; color: #111; }
.vbar { display: flex; flex-direction: column; width: 16px; }
.vbar .sbtn { height: 16px; }

.push-btn {
  height: 20px;
  margin-left: 3px;
  color: #808080;
  text-shadow: 1px 1px 0 #fff;
  background: #d4d0c8;
  border: 1px solid;
  border-color: #fff #404040 #404040 #fff;
  box-shadow: inset -1px -1px 0 #808080;
}
.b1 { width: 118px; margin-top: 1px; }
.b2 { width: 150px; }
.b3 { width: 142px; }
.b4 { width: 134px; }
.actions { display: grid; grid-template-columns: 31.700% 37.200% 1fr; margin-top: 3px; }
.actions .b3 { margin-left: 0; }

.samples { border-collapse: collapse; table-layout: fixed; width: 570px; }
.k1 { width: 84px; }
.k2 { width: 64px; }
.k3 { width: 63px; }
.samples th, .samples td {
  border: 1px solid #000;
  padding: 1px 1px 0;
  font-weight: normal;
  text-align: left;
  vertical-align: top;
  white-space: nowrap;
}
.samples label { display: flex; gap: 3px; }

/* status bar */
.status { display: flex; gap: 2px; height: 26px; padding: 2px 1px 3px 0; border-bottom: 1px solid #fff; }
.panel {
  display: flex;
  align-items: center;
  padding: 0 6px;
  border: 1px solid;
  border-color: #808080 #fff #fff #808080;
}
.panel.host { gap: 8px; padding-right: 3px; }
```
